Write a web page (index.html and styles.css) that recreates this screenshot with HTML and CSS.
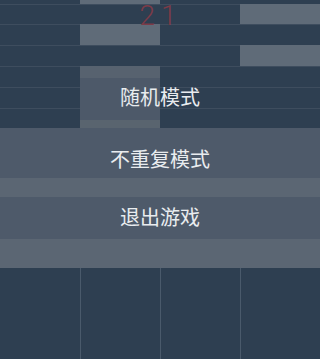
FILE: index.html
```html
<!DOCTYPE html>
<html lang="zh">
<head>
<meta charset="utf-8">
<title>别踩白块</title>
<link rel="stylesheet" href="styles.css">
</head>
<body>
<div class="screen">
  <div class="board">
    <div class="grid">
      <i class="d"></i><i class="l"></i><i class="d"></i><i class="d"></i>
      <i class="d ln"></i><i class="d ln"></i><i class="d ln"></i><i class="l"></i>
      <i class="d ln"></i><i class="l"></i><i class="d ln"></i><i class="d ln"></i>
      <i class="d ln"></i><i class="d ln"></i><i class="d ln"></i><i class="l"></i>
      <i class="d ln"></i>
      <div class="tall">
        <div class="tall-top"></div>
        <div class="tall-mid"></div>
        <div class="tall-bot"></div>
      </div>
      <i class="d ln"></i><i class="d ln"></i>
      <i class="d ln"></i><i class="d ln"></i><i class="d ln"></i>
      <i class="d ln"></i><i class="d ln"></i><i class="d ln"></i>
    </div>
    <div class="filler"></div>
    <div class="bottom">
      <i class="col"></i><i class="col sep"></i><i class="col sep"></i><i class="col sep"></i>
    </div>
  </div>

  <div class="score">21</div>

  <div class="menu">
    <div class="btn b1">随机模式</div>
    <div class="gap"></div>
    <div class="btn b2">不重复模式</div>
    <div class="band b-short"></div>
    <div class="btn b3">退出游戏</div>
    <div class="band b-long"></div>
  </div>
</div>
</body>
</html>
```

FILE: styles.css
```css
html, body {
  margin: 0;
  padding: 0;
  background: #2e3f51;
}

.screen {
  position: relative;
  width: 100%;
  height: 359px;
  overflow: hidden;
  font-family: "Noto Sans CJK SC", "Noto Sans", sans-serif;
}

.board {
  display: flex;
  flex-direction: column;
  height: 359px;
}

.grid {
  display: grid;
  grid-template-columns: repeat(4, 1fr);
  grid-template-rows: 4px 20px 21px 21px 21px 21px 20px;
}

.grid i {
  display: block;
}

.d {
  background: #2e3f51;
}

.d.ln {
  border-top: 1px solid #3e4d5e;
}

.l {
  background: #5f6b78;
}

.tall {
  grid-column: 2;
  grid-row: 5 / span 3;
  display: flex;
  flex-direction: column;
}

.tall-top {
  height: 12px;
  background: #57626f;
}

.tall-mid {
  height: 42px;
  background: #4d5969;
}

.tall-bot {
  flex: 1;
  background: #59646f;
}

.filler {
  height: 140px;
  background: #2e3f51;
}

.bottom {
  flex: 1;
  display: grid;
  grid-template-columns: repeat(4, 1fr);
}

.col {
  display: block;
  background: #2e3f51;
}

.col.sep {
  border-left: 1px solid #4a5a6b;
}

.score {
  position: absolute;
  top: 0;
  left: 0;
  right: 0;
  padding-left: 2px;
  text-align: center;
  font-family: Roboto, "Noto Sans", sans-serif;
  font-weight: 300;
  font-size: 28px;
  line-height: 32px;
  letter-spacing: 6px;
  color: #7c3b48;
}

.menu {
  position: absolute;
  top: 78px;
  left: 0;
  right: 0;
  display: flex;
  flex-direction: column;
}

.btn {
  display: flex;
  justify-content: center;
  align-items: flex-start;
  box-sizing: border-box;
  font-size: 20px;
  line-height: 20px;
  color: #e9ecef;
}

.b1 {
  height: 42px;
  padding-top: 9px;
}

.gap {
  height: 8px;
}

.b2 {
  height: 50px;
  padding-top: 21px;
  background: #4e5a6a;
}

.b3 {
  height: 42px;
  padding-top: 10px;
  background: #4e5a6a;
}

.band {
  background: #5b6673;
}

.b-short {
  height: 19px;
}

.b-long {
  height: 29px;
}
```
